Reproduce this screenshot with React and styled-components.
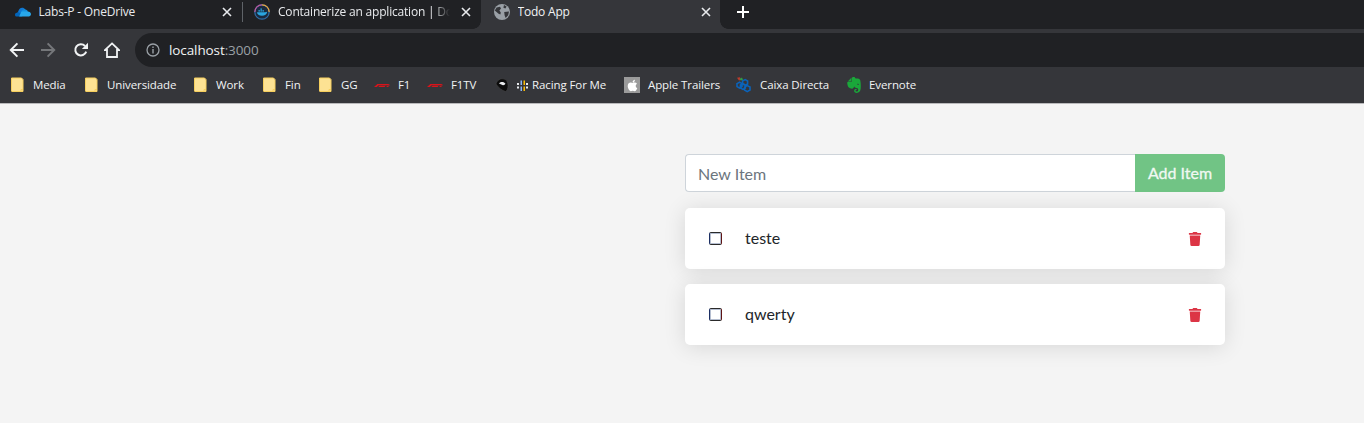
import React from "react";
import styled, { createGlobalStyle } from "styled-components";
import { FaTrash, FaApple } from "react-icons/fa";
import { SiEvernote } from "react-icons/si";

const GlobalStyle = createGlobalStyle`
  html, body {
    margin: 0;
    height: 100%;
    overflow: hidden;
    background: #f4f4f4;
  }
  * { box-sizing: border-box; }
`;

const Cloud = () => (
  <svg width="16" height="16" viewBox="0 0 16 16">
    <path d="M5 12.5 1.6 12.5C.5 12.5 0 11.6 0 10.7 0 9.6.8 8.8 1.9 8.8L5 6.5 9 9 7 12.5Z" fill="#0364b8" />
    <path d="M3.3 7.6C3.7 5.4 5.3 3.8 7.2 3.8 8.5 3.8 9.5 4.4 10.2 5.4L8 9 4 8.8Z" fill="#0f78d4" />
    <path d="M6 7.8C6.8 6.2 8.1 5.2 9.6 5.2 11.1 5.2 12.4 6.2 12.9 7.4L10 10 6.5 9Z" fill="#1490df" />
    <path d="M4.2 12.5 6 8.2C6.6 7.7 7.6 7.6 8.6 7.6L12.8 7.4C14.6 7.5 16 8.6 16 10.1 16 11.6 15 12.5 13.8 12.5Z" fill="#28a8ea" />
  </svg>
);

const DockerIcon = () => (
  <svg width="16" height="16" viewBox="0 0 16 16">
    <circle cx="8" cy="8" r="7.2" fill="#1b2b3f" stroke="#2f6ea8" strokeWidth="1.2" />
    <path d="M8 .8A7.2 7.2 0 0 1 15.2 8" fill="none" stroke="#e8a23a" strokeWidth="1.2" />
    <path d="M.8 8A7.2 7.2 0 0 1 8 .8" fill="none" stroke="#c0569a" strokeWidth="1.2" />
    <path d="M3 8.2H11.2C11.8 8.2 12.3 7.8 13.2 7.8 12.8 10.2 10.8 11.8 8 11.8 5 11.8 3.2 10.4 3 8.2Z" fill="#2aa6e0" />
    <path d="M4.4 6.2H6V7.6H4.4ZM6.4 6.2H8V7.6H6.4ZM8.4 6.2H10V7.6H8.4ZM6.4 4.4H8V5.8H6.4Z" fill="#2aa6e0" />
  </svg>
);

const GlobeIcon = () => (
  <svg width="16" height="16" viewBox="0 0 16 16">
    <circle cx="8" cy="8" r="8" fill="#9aa0a6" />
    <path d="M2.6 3.4 6 2.8 7 4.6 5.4 6.6 6.8 8.6 6.4 10.6 4.6 9.8 .8 6.4ZM10 1 12.6 2.6 11.4 4.6 9.4 3.8ZM10.2 8 15 7.4 14.2 11.2 11.6 14 10.6 11.2Z" fill="#35363a" />
  </svg>
);

const CloseIcon = () => (
  <svg width="16" height="16" viewBox="0 0 16 16">
    <path d="M4 4 12 12M12 4 4 12" stroke="#e8eaed" strokeWidth="1.6" />
  </svg>
);

const PlusIcon = () => (
  <svg width="16" height="16" viewBox="0 0 16 16">
    <path d="M8 2V14M2 8H14" stroke="#fff" strokeWidth="2" />
  </svg>
);

const ArrowLeft = ({ color }) => (
  <svg width="16" height="16" viewBox="0 0 16 16">
    <path d="M16 8H3M9.4 1.4 2.8 8l6.6 6.6" fill="none" stroke={color} strokeWidth="2" />
  </svg>
);

const ArrowRight = ({ color }) => (
  <svg width="16" height="16" viewBox="0 0 16 16">
    <path d="M1 8H14M7.6 1.4 14.2 8l-6.6 6.6" fill="none" stroke={color} strokeWidth="2" />
  </svg>
);

const ReloadIcon = () => (
  <svg width="16" height="16" viewBox="0 0 16 16">
    <path d="M13.2 9.6A5.6 5.6 0 1 1 12 4" fill="none" stroke="#f1f3f4" strokeWidth="2" />
    <path d="M15 .8V7H8.8Z" fill="#f1f3f4" />
  </svg>
);

const HomeIcon = () => (
  <svg width="16" height="16" viewBox="0 0 16 16">
    <path d="M8 1.4 15 8H13V15H3V8H1Z" fill="none" stroke="#f1f3f4" strokeWidth="1.8" />
  </svg>
);

const InfoIcon = () => (
  <svg width="14" height="14" viewBox="0 0 14 14">
    <circle cx="7" cy="7" r="6" fill="none" stroke="#9aa0a6" strokeWidth="1.3" />
    <path d="M7 6V10.4M7 3.4V5" stroke="#9aa0a6" strokeWidth="1.4" />
  </svg>
);

const FolderIcon = () => (
  <svg width="16" height="16" viewBox="0 0 16 16">
    <path d="M2.5 1H12.5L14 2.5V14.5H3C2.7 14.5 2.5 14.3 2.5 14Z" fill="#fde293" stroke="#f6cf5e" />
    <path d="M12 14.5V12.5H14" fill="none" stroke="#f6cf5e" />
  </svg>
);

const F1Icon = () => (
  <svg width="16" height="16" viewBox="0 0 16 16">
    <path d="M0 10 3.4 7H16L13.8 8.2H4.6L2.8 10ZM4.2 10 5.6 8.7H11.6L10.6 10ZM12 10 14 8.6H16L13.8 10Z" fill="#d8141b" />
  </svg>
);

const HelmetIcon = () => (
  <svg width="16" height="16" viewBox="0 0 16 16">
    <path d="M2 7C3 3.5 6 1.5 9 1.8 12.5 2.2 14 5 14 8.5 14 11.5 13 14 11.5 14.5 8.5 13.5 4.5 11 2 7Z" fill="#0c0c0c" stroke="#4a4a4a" strokeWidth=".5" />
    <path d="M5 6.4C6.8 4.4 10 4.6 11.4 6.6 11 8 9.4 8.6 8.4 8 7.4 7.4 6 7 5 6.4Z" fill="#e8eaed" />
  </svg>
);

const RacingGlyph = () => (
  <svg width="11" height="16" viewBox="0 0 11 16">
    <path d="M0 6H2V8H0ZM0 9.5H2V11.5H0ZM9 6H11V8H9ZM9 9.5H11V11.5H9Z" fill="#e8eaed" />
    <path d="M3.5 3.5H5V8H3.5ZM3.5 9.5H5V14H3.5Z" fill="#8ab4f8" />
    <path d="M6.5 3.5H8V8H6.5ZM6.5 9.5H8V14H6.5Z" fill="#fbbc04" />
  </svg>
);

const AppleTile = styled.span`
  width: 16px;
  height: 16px;
  background: #9b9b9b;
  color: #fff;
  display: flex;
  align-items: center;
  justify-content: center;
  font-size: 13px;
`;

const CaixaIcon = () => (
  <svg width="16" height="16" viewBox="0 0 16 16">
    <path d="M1 .8 4 .2 5 3 3 3.4Z" fill="#c0392b" />
    <path d="M3.4 2 6 .4 7 3 5 3.4Z" fill="#2e9a47" />
    <path d="M6.6 4 9.2 2.6 11.6 4V7L9.2 8.4 6.6 7ZM4.4 8 7 6.6 9.4 8V11L7 12.4 4.4 11ZM8.6 10 11.2 8.6 14 10V13L11.2 14.6 8.6 13ZM1 6.6 3.6 5.2 6 6.6V9.6L3.6 11 1 9.6Z" fill="none" stroke="#0b63ba" strokeWidth="1.6" />
  </svg>
);

const TOPBAR = "#35363a";
const STRIP = "#202124";

const Chrome = styled.header`
  background: ${TOPBAR};
  border-bottom: 1px solid #b9b9bb;
  font-family: "Open Sans", "Noto Sans", sans-serif;
  color: #f1f3f4;
`;

const TabStrip = styled.div`
  display: flex;
  align-items: flex-start;
  height: 29px;
  padding-left: 1.5px;
  background: ${STRIP};
`;

const Tab = styled.div`
  position: relative;
  display: flex;
  align-items: center;
  gap: 8px;
  width: 239.5px;
  height: 29px;
  padding: 0 6.5px 6px 13px;
  font-size: 12px;
  letter-spacing: -0.2px;
  color: ${(p) => (p.$active ? "#f1f3f4" : "#e8eaed")};
  background: ${(p) => (p.$active ? TOPBAR : "transparent")};

  ${(p) =>
    p.$active &&
    `
    &::before, &::after {
      content: "";
      position: absolute;
      bottom: 0;
      width: 8px;
      height: 8px;
    }
    &::before {
      left: -8px;
      background: radial-gradient(circle at 0 0, ${STRIP} 7.5px, ${TOPBAR} 8px);
    }
    &::after {
      right: -8px;
      background: radial-gradient(circle at 100% 0, ${STRIP} 7.5px, ${TOPBAR} 8px);
    }
  `}
`;

const Separator = styled.span`
  position: absolute;
  right: -2px;
  top: 2px;
  width: 1px;
  height: 20px;
  background: #5f6368;
`;

const TabTitle = styled.span`
  flex: 1;
  min-width: 0;
  white-space: nowrap;
  overflow: hidden;
  ${(p) =>
    p.$fade &&
    `
    mask-image: linear-gradient(to right, #000 90%, transparent 100%);
  `}
`;

const NewTab = styled.span`
  display: flex;
  margin: 4px 0 0 15px;
`;

const Toolbar = styled.div`
  display: flex;
  align-items: center;
  height: 38px;
  padding: 4px 0 0 8px;
`;

const NavButton = styled.span`
  display: flex;
  width: 16px;
  margin-right: ${(p) => p.$gap}px;
`;

const AddressBar = styled.div`
  flex: 1;
  display: flex;
  align-items: center;
  height: 34px;
  padding-left: 11px;
  margin-left: 15px;
  background: ${STRIP};
  border-radius: 17px 0 0 17px;
`;

const Url = styled.span`
  margin-left: 9px;
  font-size: 13.5px;
  letter-spacing: -0.1px;
  color: #f1f3f4;
`;

const UrlPort = styled.span`
  color: #9aa0a6;
`;

const BookmarkBar = styled.div`
  display: flex;
  align-items: center;
  gap: 17px;
  height: 36px;
  padding-left: 9px;
`;

const Bookmark = styled.div`
  display: flex;
  align-items: center;
  gap: ${(p) => p.$gap ?? 8}px;
  font-size: 11.5px;
  letter-spacing: -0.1px;
  white-space: nowrap;
`;

const BookmarkLabel = styled.span`
  width: ${(p) => p.$w}px;
  padding-bottom: 1px;
`;

const Page = styled.main`
  display: flex;
  justify-content: flex-end;
  padding: 50px 139px 0 0;
  font-family: "Lato", sans-serif;
`;

const TodoColumn = styled.section`
  display: flex;
  flex-direction: column;
  gap: 15px;
  width: 540px;
`;

const NewItemForm = styled.form`
  display: flex;
  height: 38px;
  margin-bottom: 1px;
`;

const ItemInput = styled.input`
  flex: 1;
  min-width: 0;
  padding: 0 12px;
  border: 1px solid #ced4da;
  border-right: 0;
  border-radius: 4px 0 0 4px;
  background: #fff;
  font: 16px "Lato", sans-serif;
  &::placeholder {
    color: #6c757d;
    opacity: 1;
  }
`;

const AddButton = styled.button`
  width: 90px;
  padding: 0 0 2px;
  border: 0;
  border-radius: 0 4px 4px 0;
  background: #71c485;
  color: #f0f8f2;
  font: 16px "Lato", sans-serif;
  -webkit-text-stroke: 0.3px #f0f8f2;
`;

const TodoCard = styled.article`
  display: flex;
  align-items: center;
  height: 61px;
  padding: 0 23px 0 24px;
  background: #fff;
  border-radius: 5px;
  box-shadow: 0 2px 22px rgba(0, 0, 0, 0.12);
`;

const Check = styled.span`
  width: 13px;
  height: 13px;
  border: 1px solid #2a2a2a;
  border-left-color: #1c2f63;
  border-right-color: #5e1414;
  border-radius: 2px;
  background: #fff;
  box-shadow: inset 0 0 0 1px rgba(90, 110, 150, 0.45);
`;

const TodoText = styled.span`
  flex: 1;
  margin: 0 0 2px 23px;
  font-size: 16px;
  color: #212529;
`;

const DeleteIcon = styled(FaTrash)`
  width: 14px;
  height: 14px;
  color: #dc3545;
`;

const RacingIcons = styled.span`
  display: flex;
  align-items: center;
  gap: 7px;
`;

const bookmarks = [
  { label: "Media", w: 33, icon: <FolderIcon /> },
  { label: "Universidade", w: 68, icon: <FolderIcon /> },
  { label: "Work", w: 28, icon: <FolderIcon /> },
  { label: "Fin", w: 15, icon: <FolderIcon /> },
  { label: "GG", w: 16, icon: <FolderIcon /> },
  { label: "F1", w: 12, icon: <F1Icon /> },
  { label: "F1TV", w: 26, icon: <F1Icon /> },
  {
    label: "Racing For Me",
    w: 75,
    gap: 4,
    icon: (
      <RacingIcons>
        <HelmetIcon />
        <RacingGlyph />
      </RacingIcons>
    ),
  },
  { label: "Apple Trailers", w: 71, icon: <AppleTile><FaApple /></AppleTile> },
  { label: "Caixa Directa", w: 69, icon: <CaixaIcon /> },
  { label: "Evernote", w: 46, gap: 7, icon: <SiEvernote size={16} color="#1aa83a" /> },
];

const todos = ["teste", "qwerty"];

export default function App() {
  return (
    <>
      <GlobalStyle />
      <Chrome>
        <TabStrip>
          <Tab>
            <Cloud />
            <TabTitle>Labs-P - OneDrive</TabTitle>
            <CloseIcon />
            <Separator />
          </Tab>
          <Tab>
            <DockerIcon />
            <TabTitle $fade>Containerize an application | Do</TabTitle>
            <CloseIcon />
          </Tab>
          <Tab $active>
            <GlobeIcon />
            <TabTitle>Todo App</TabTitle>
            <CloseIcon />
          </Tab>
          <NewTab>
            <PlusIcon />
          </NewTab>
        </TabStrip>
        <Toolbar>
          <NavButton $gap={16}><ArrowLeft color="#f1f3f4" /></NavButton>
          <NavButton $gap={17}><ArrowRight color="#75777a" /></NavButton>
          <NavButton $gap={15}><ReloadIcon /></NavButton>
          <NavButton $gap={0}><HomeIcon /></NavButton>
          <AddressBar>
            <InfoIcon />
            <Url>localhost<UrlPort>:3000</UrlPort></Url>
          </AddressBar>
        </Toolbar>
        <BookmarkBar>
          {bookmarks.map((b) => (
            <Bookmark key={b.label} $gap={b.gap}>
              {b.icon}
              <BookmarkLabel $w={b.w}>{b.label}</BookmarkLabel>
            </Bookmark>
          ))}
        </BookmarkBar>
      </Chrome>
      <Page>
        <TodoColumn>
          <NewItemForm>
            <ItemInput placeholder="New Item" />
            <AddButton type="button">Add Item</AddButton>
          </NewItemForm>
          {todos.map((t) => (
            <TodoCard key={t}>
              <Check />
              <TodoText>{t}</TodoText>
              <DeleteIcon />
            </TodoCard>
          ))}
        </TodoColumn>
      </Page>
    </>
  );
}
